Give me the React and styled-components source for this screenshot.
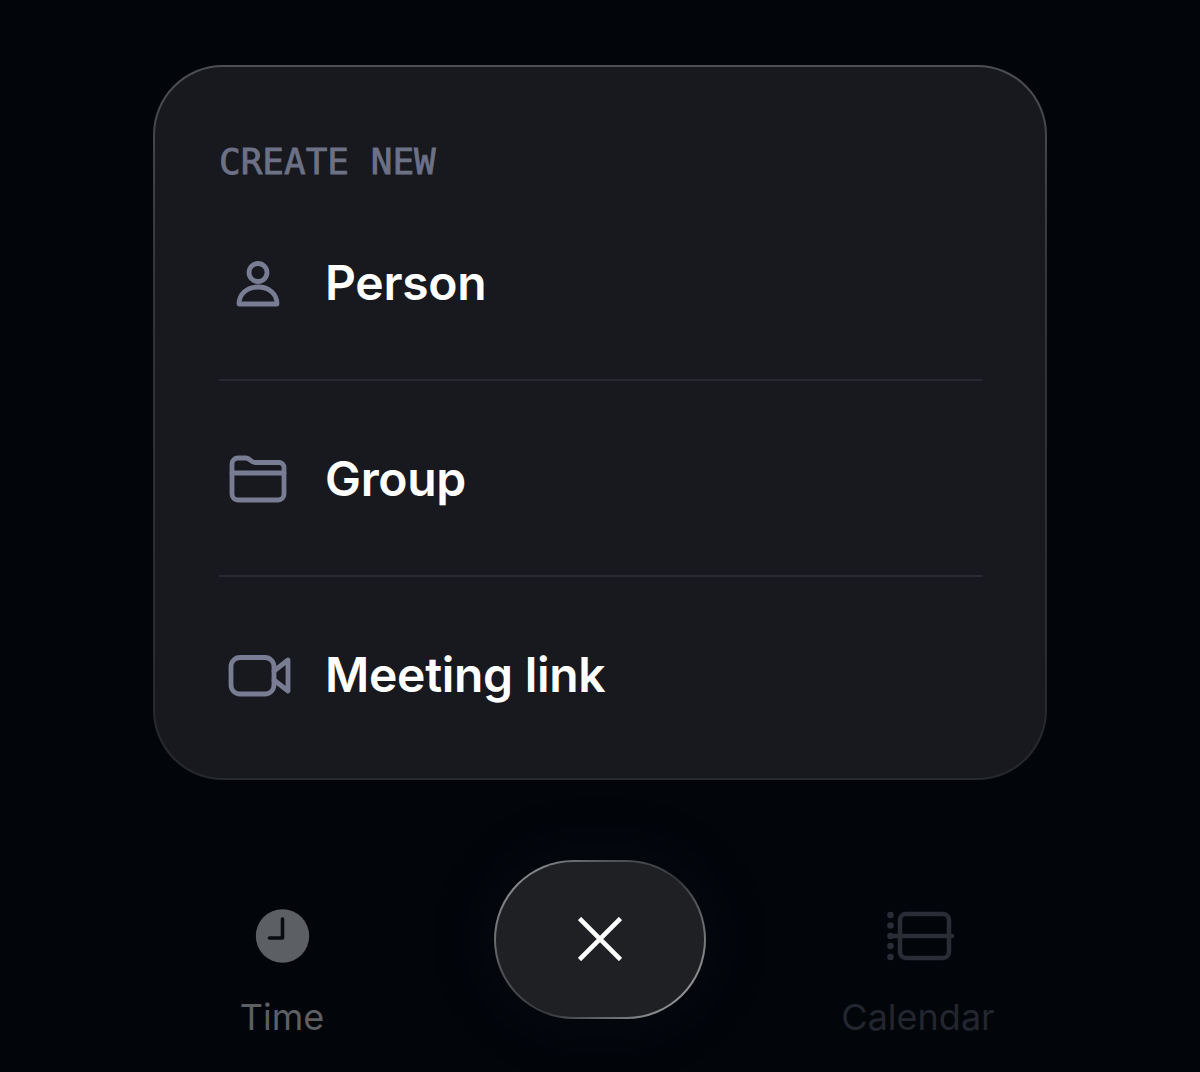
import React from 'react';
import styled, { createGlobalStyle } from 'styled-components';

const GlobalStyle = createGlobalStyle`
  html, body {
    margin: 0;
    padding: 0;
    background: #02050a;
  }
`;

const Page = styled.div`
  width: 1200px;
  height: 1072px;
  overflow: hidden;
  background: #02050a;
  display: flex;
  flex-direction: column;
  align-items: center;
  padding-top: 65px;
  box-sizing: border-box;
  font-family: Inter, "Liberation Sans", sans-serif;
`;

const Card = styled.div`
  width: 894px;
  height: 715px;
  box-sizing: border-box;
  padding: 72px 63px 0 64px;
  border: 2px solid transparent;
  border-radius: 70px;
  background:
    linear-gradient(#18191e, #18191e) padding-box,
    linear-gradient(180deg, #4c4e52 0%, #333439 30%, #27282d 100%) border-box;
`;

const Label = styled.div`
  height: 46px;
  line-height: 46px;
  font-family: "DejaVu Sans Mono", "Liberation Mono", monospace;
  font-size: 36px;
  color: #6c7186;
  -webkit-text-stroke: 0.8px #6c7186;
`;

const Row = styled.div`
  height: 196px;
  box-sizing: border-box;
  padding-top: 4px;
  display: flex;
  align-items: center;
  border-bottom: 2px solid ${props => (props.last ? 'transparent' : '#272933')};
`;

const IconSlot = styled.svg`
  width: 106px;
  height: 64px;
  flex: none;
  fill: none;
  stroke: #787d94;
  stroke-width: 4.8;
  stroke-linejoin: round;
  stroke-linecap: round;
`;

const RowText = styled.span`
  margin-top: -3px;
  font-size: 48px;
  font-weight: 600;
  letter-spacing: -0.3px;
  color: #ffffff;
`;

const TabBar = styled.div`
  margin-top: 80px;
  display: flex;
  justify-content: center;
  align-items: flex-start;
`;

const Tab = styled.div`
  width: 318px;
  padding-top: 46px;
  display: flex;
  flex-direction: column;
  align-items: center;
`;

const TabIcon = styled.svg`
  width: 80px;
  height: 60px;
  display: block;
`;

const TabLabel = styled.span`
  margin-top: 29px;
  font-size: 36px;
  line-height: 44px;
  color: ${props => props.color};
`;

const CloseButton = styled.button`
  width: 212px;
  height: 159px;
  flex: none;
  margin: 0 53px;
  padding: 0 0 2px;
  display: flex;
  align-items: center;
  justify-content: center;
  border: 2px solid transparent;
  border-radius: 80px;
  background:
    linear-gradient(135deg, #1f2024, #1f2024) padding-box,
    linear-gradient(135deg, #a8a9ab 0%, #55565a 30%, #35363a 55%, #b4b5b7 100%) border-box;
  box-shadow: 0 0 50px 16px rgba(24, 26, 34, 0.16);
`;

const CloseIcon = styled.svg`
  width: 44px;
  height: 44px;
  fill: none;
  stroke: #ffffff;
  stroke-width: 4.6;
`;

const PersonIcon = () => (
  <IconSlot viewBox="219 252 106 64">
    <circle cx="258" cy="272.5" r="9" />
    <path d="M239 304c0-10 8-17 19-17s19 7 19 17z" />
  </IconSlot>
);

const FolderIcon = () => (
  <IconSlot viewBox="219 448 106 64">
    <path d="M232 464a6 6 0 0 1 6-6h8c4 0 5 4.5 9 4.5h24a5 5 0 0 1 5 5V494a6 6 0 0 1-6 6H238a6 6 0 0 1-6-6z" />
    <path d="M232 473H284" />
  </IconSlot>
);

const VideoIcon = () => (
  <IconSlot viewBox="219 644 106 64">
    <rect x="231" y="657.5" width="43" height="36.5" rx="9" />
    <path d="M274 671l14-11v31l-14-11" />
  </IconSlot>
);

const ClockIcon = () => (
  <TabIcon viewBox="241 906 80 60">
    <circle cx="281.5" cy="936" r="26.7" fill="#5c5f64" />
    <path d="M281.5 919v19h-13" fill="none" stroke="#0a0b10" strokeWidth="3.6" strokeLinecap="round" strokeLinejoin="round" />
  </TabIcon>
);

const CalendarIcon = () => (
  <TabIcon viewBox="878 906 80 60">
    <rect x="900" y="914" width="49" height="44" rx="6" fill="none" stroke="#2a2d36" strokeWidth="4.5" />
    <path d="M890 936H952" stroke="#2a2d36" strokeWidth="4.5" strokeLinecap="round" />
    {[915, 925.5, 936, 946, 957].map(cy => (
      <circle key={cy} cx="890.5" cy={cy} r="3.3" fill="#2a2d36" />
    ))}
  </TabIcon>
);

const items = [
  { name: 'Person', Icon: PersonIcon },
  { name: 'Group', Icon: FolderIcon },
  { name: 'Meeting link', Icon: VideoIcon },
];

const App = () => (
  <Page>
    <GlobalStyle />
    <Card>
      <Label>CREATE NEW</Label>
      {items.map(({ name, Icon }, i) => (
        <Row key={name} last={i === items.length - 1}>
          <Icon />
          <RowText>{name}</RowText>
        </Row>
      ))}
    </Card>
    <TabBar>
      <Tab>
        <ClockIcon />
        <TabLabel color="#5c5f64">Time</TabLabel>
      </Tab>
      <CloseButton aria-label="Close">
        <CloseIcon viewBox="0 0 44 44">
          <path d="M1.5 1.5L42.5 42.5M42.5 1.5L1.5 42.5" />
        </CloseIcon>
      </CloseButton>
      <Tab>
        <CalendarIcon />
        <TabLabel color="#23262f">Calendar</TabLabel>
      </Tab>
    </TabBar>
  </Page>
);

export default App;
